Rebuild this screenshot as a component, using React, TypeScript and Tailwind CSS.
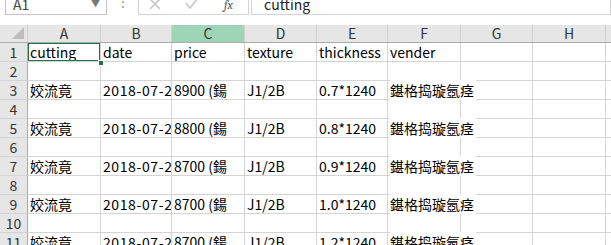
import React from "react";

const cols = ["A", "B", "C", "D", "E", "F", "G", "H", ""];
const widths = [73, 71, 73, 72, 71, 73, 72, 73, 40];

type Row = string[];
const data: Row[] = [
  ["cutting", "date", "price", "texture", "thickness", "vender"],
  [],
  ["姣流竟", "2018-07-28", "8900 (鍚", "J1/2B", "0.7*1240", "鍖格捣璇氬痉"],
  [],
  ["姣流竟", "2018-07-28", "8800 (鍚", "J1/2B", "0.8*1240", "鍖格捣璇氬痉"],
  [],
  ["姣流竟", "2018-07-28", "8700 (鍚", "J1/2B", "0.9*1240", "鍖格捣璇氬痉"],
  [],
  ["姣流竟", "2018-07-28", "8700 (鍚", "J1/2B", "1.0*1240", "鍖格捣璇氬痉"],
  [],
  ["姣流竟", "2018-07-28", "8700 (鍚", "J1/2B", "1.2*1240", "鍖格捣璇氬痉"],
];

const font = { fontFamily: '"Noto Sans CJK SC", "Noto Sans", sans-serif' };

export default function App() {
  return (
    <div className="w-[611px] h-[245px] overflow-hidden bg-white relative" style={font}>
      {/* formula bar */}
      <div className="h-[25px] flex items-start relative overflow-hidden">
        <div className="ml-[5px] mt-[-10px] w-[102px] h-[25px] border border-[#c6c6c6] bg-white flex items-center justify-between pl-[7px] pr-[6px] text-[14px] text-[#444]">
          <span className="leading-none pt-[3px]">A1</span>
          <span className="text-[9px] text-[#777] pt-[3px]">▼</span>
        </div>
        <div className="w-[31px] flex justify-center mt-[-6px] text-[#9a9a9a] text-[14px] leading-none">⋮</div>
        <div className="mt-[-10px] w-[111px] h-[25px] border border-[#d4d4d4] bg-white flex items-center relative text-[#c4c4c4]">
          <svg className="absolute left-[9px] top-[6px]" width="14" height="14" viewBox="0 0 14 14">
            <path d="M2 2 L12 12 M12 2 L2 12" stroke="#c8c8c8" strokeWidth="1.6" fill="none" />
          </svg>
          <svg className="absolute left-[45px] top-[6px]" width="16" height="14" viewBox="0 0 16 14">
            <path d="M2 6 L6 11 L14 1" stroke="#c8c8c8" strokeWidth="1.6" fill="none" />
          </svg>
          <span className="absolute left-[85px] top-[5px] text-[12px] italic text-[#555] font-serif">fx</span>
        </div>
        <div className="ml-[2px] mt-[-10px] flex-1 h-[25px] border border-[#d4d4d4] bg-white pl-[12px] text-[14px] text-[#222] flex items-center">
          <span className="pt-[3px]">cutting</span>
        </div>
      </div>
      {/* header */}
      <div className="flex h-[18px] bg-[#e6e6e6] border-b border-[#ababab]">
        <div className="w-[28px] shrink-0 relative border-r border-[#d0d0d0]">
          <div
            className="absolute right-[3px] bottom-[3px] w-[12px] h-[12px] bg-[#bcbcbc]"
            style={{ clipPath: "polygon(100% 0, 100% 100%, 0 100%)" }}
          />
        </div>
        {cols.map((c, i) => (
          <div
            key={i}
            style={{ width: widths[i] }}
            className={`shrink-0 flex items-center justify-center text-[14px] text-[#333] border-r border-[#d0d0d0] ${
              c === "C" ? "bg-[#9fd5b7] text-[#1e4d32]" : ""
            }`}
          >
            {c}
          </div>
        ))}
      </div>
      {/* rows */}
      {data.map((row, r) => (
        <div key={r} className="flex h-[19px]">
          <div className="w-[28px] shrink-0 bg-[#e6e6e6] border-r border-[#ababab] border-b border-b-[#d4d4d4] flex items-end justify-center text-[14px] text-[#333] leading-[18px]">
            {r + 1}
          </div>
          {widths.map((w, i) => {
            const overflowF = i === 5 && r > 0 && row[i];
            return (
              <div
                key={i}
                style={{ width: w }}
                className={`shrink-0 border-r border-b border-[#d4d4d4] whitespace-nowrap pl-[2px] text-[14px] text-black leading-[18px] relative ${
                  overflowF ? "overflow-visible z-10" : "overflow-hidden"
                } ${i === 1 && r > 0 ? "tracking-[0.6px]" : ""}`}
              >
                {overflowF ? (
                  <span className="relative bg-white pr-[2px]">{row[i]}</span>
                ) : (
                  row[i] ?? ""
                )}
                {r === 0 && i === 0 && (
                  <div className="absolute left-[-1px] top-[-1px] w-[74px] h-[20px] border-2 border-[#217346]" />
                )}
              </div>
            );
          })}
        </div>
      ))}
      <div className="absolute left-[98px] top-[60px] w-[6px] h-[6px] bg-[#217346] border border-white z-20" />
    </div>
  );
}
